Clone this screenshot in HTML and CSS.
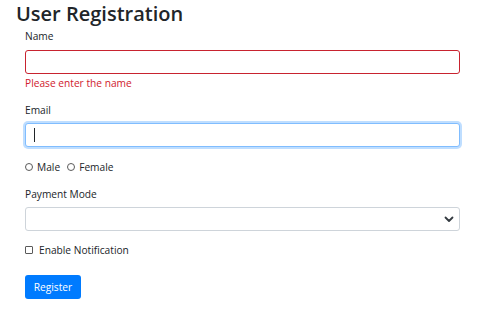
FILE: index.html
```html
<!DOCTYPE html>
<html lang="en">
<head>
  <meta charset="UTF-8" />
  <meta name="viewport" content="width=device-width, initial-scale=1.0"/>
  <title>User Registration</title>
  <link rel="stylesheet" href="styles.css">
</head>
<body>

  <h2 class="titulo">User Registration</h2>

  <form class="formulario">
    <!-- NOMBRE -->
    <label class="etiqueta etiqueta-primera" for="name">Name</label>
    <input class="campo campo-error" id="name" type="text">
    <p class="error">Please enter the name</p>

    <!-- EMAIL -->
    <label class="etiqueta" for="email">Email</label>
    <div class="campo-caja">
      <input class="campo campo-foco" id="email" type="text">
      <span class="cursor"></span>
    </div>

    <!-- GENERO -->
    <div class="opciones">
      <label class="opcion"><input type="radio" name="gender" class="radio"> Male</label>
      <label class="opcion"><input type="radio" name="gender" class="radio"> Female</label>
    </div>

    <!-- PAGO -->
    <label class="etiqueta" for="payment">Payment Mode</label>
    <div class="campo-caja">
      <select class="campo selector" id="payment">
        <option></option>
      </select>
      <svg class="flecha" width="10" height="7" viewBox="0 0 10 7">
        <path d="M1.5 1.5 L5 5 L8.5 1.5" fill="none" stroke="#343a40" stroke-width="1.8" stroke-linecap="round" stroke-linejoin="round"/>
      </svg>
    </div>

    <!-- NOTIFICACION -->
    <label class="opcion notificacion"><input type="checkbox" class="check"> Enable Notification</label>

    <button type="button" class="boton">Register</button>
  </form>

</body>
</html>
```

FILE: styles.css
```css
body {
  font-family: "Open Sans", Arial, sans-serif;
  color: #212529;
  background-color: #ffffff;
  margin: 0;
}

.titulo {
  margin: 0 0 0 16px;
  font-size: 20px;
  line-height: 27px;
  font-weight: 600;
}

.formulario {
  width: 435px;
  padding: 0 25px;
}

.etiqueta {
  display: block;
  font-size: 10.2px;
  line-height: 16px;
  margin-top: 11px;
}

.etiqueta-primera {
  margin-top: 1px;
}

.campo {
  display: block;
  box-sizing: border-box;
  width: 435px;
  height: 24px;
  margin: 6px 0 0 0;
  padding: 0 8px;
  border: 1px solid #ced4da;
  border-radius: 3px;
  background-color: #ffffff;
  font-family: inherit;
  font-size: 11px;
  outline: none;
}

.campo-error {
  border-color: #c8232f;
}

.error {
  margin: 1px 0 0 0;
  font-size: 10.2px;
  line-height: 16px;
  color: #d0202d;
}

.campo-caja {
  position: relative;
  margin-top: 5px;
}

.campo-caja .campo {
  margin-top: 0;
}

.campo-foco {
  border-color: #80bdff;
  box-shadow: 0 0 0 2px rgba(0, 123, 255, 0.25);
}

.cursor {
  position: absolute;
  left: 9px;
  top: 5px;
  width: 1px;
  height: 14px;
  background-color: #212529;
}

.opciones {
  display: flex;
  gap: 7px;
  margin-top: 12px;
}

.opcion {
  display: flex;
  align-items: center;
  font-size: 10.2px;
  line-height: 16px;
}

.radio,
.check {
  appearance: none;
  -webkit-appearance: none;
  box-sizing: border-box;
  width: 8px;
  height: 8px;
  margin: 0 4px 0 0;
  border: 1px solid #5a5a5a;
  background: #ffffff;
}

.radio {
  border-radius: 50%;
}

.check {
  border-radius: 1px;
  margin-right: 6px;
}

.selector {
  appearance: none;
  -webkit-appearance: none;
}

.flecha {
  position: absolute;
  right: 6px;
  top: 9px;
}

.notificacion {
  margin-top: 11px;
}

.boton {
  display: block;
  box-sizing: border-box;
  width: 56px;
  height: 24px;
  margin-top: 17px;
  padding: 0;
  background-color: #007bff;
  color: white;
  border: none;
  border-radius: 3px;
  font-family: inherit;
  font-size: 10.2px;
  cursor: pointer;
}
```
